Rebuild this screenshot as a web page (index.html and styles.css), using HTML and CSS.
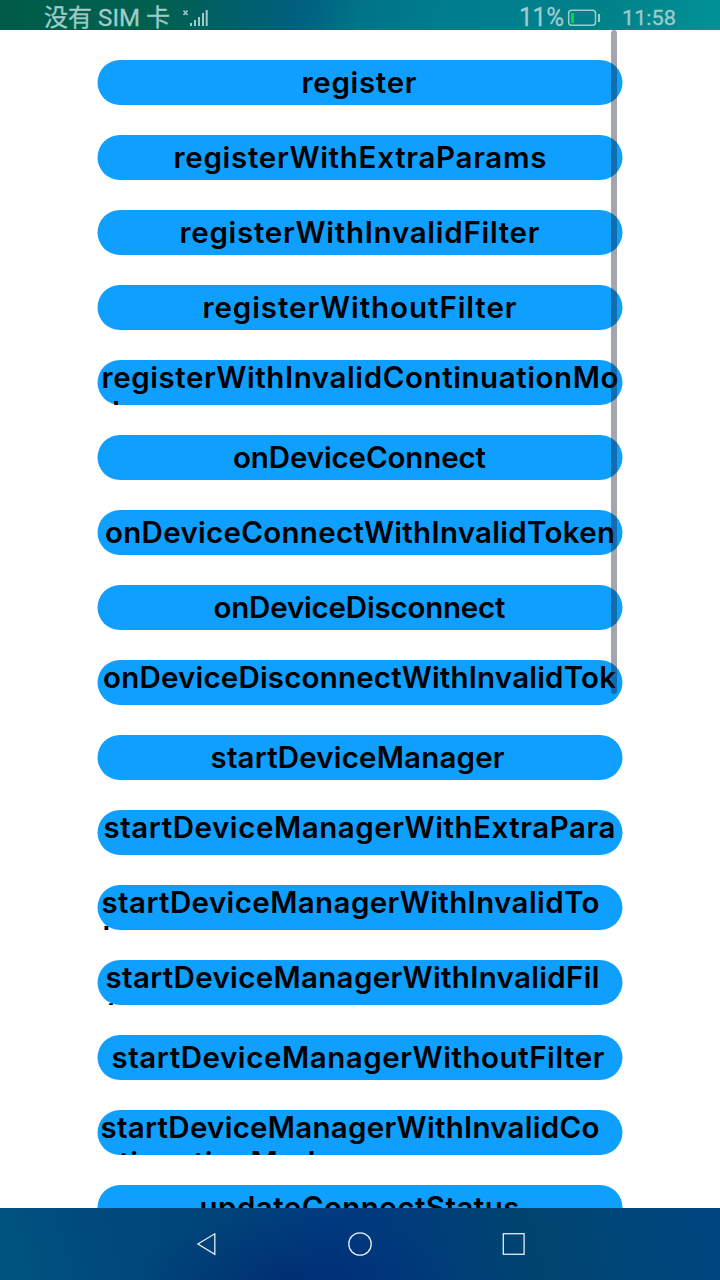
FILE: index.html
```html
<!DOCTYPE html>
<html lang="zh-CN">
<head>
<meta charset="utf-8">
<title>Continuation</title>
<link rel="stylesheet" href="styles.css">
</head>
<body>
<header class="status">
  <svg class="status-art" width="720" height="30" viewBox="0 0 720 30">
    <g class="status-text">
      <text x="44" y="25.500" font-size="24" textLength="126" lengthAdjust="spacingAndGlyphs">没有 SIM 卡</text>
      <text x="519" y="26" font-size="25" textLength="45" lengthAdjust="spacingAndGlyphs">11%</text>
      <text x="622" y="25" font-size="21" textLength="54" lengthAdjust="spacingAndGlyphs">11:58</text>
    </g>
    <path class="thin" d="M183.500 10.500l4 4.500M187.500 10.500l-4 4.500"/>
    <path class="bars" d="M191 23v3M195 20v6M199 17v9M203 13v13M206.700 10v16"/>
    <rect class="thin" x="568.700" y="10.200" width="26.800" height="15" rx="3"/>
    <path class="bars" d="M599 14v8"/>
    <rect x="571" y="13" width="3" height="10" fill="#00d83c"/>
  </svg>
</header>
<main class="list">
  <svg class="pill"><rect class="shape"/><text x="204" y="33" textLength="115">register</text></svg>
  <svg class="pill"><rect class="shape"/><text x="76" y="33" textLength="373">registerWithExtraParams</text></svg>
  <svg class="pill"><rect class="shape"/><text x="82" y="33" textLength="360">registerWithInvalidFilter</text></svg>
  <svg class="pill"><rect class="shape"/><text x="105" y="33" textLength="314">registerWithoutFilter</text></svg>
  <svg class="pill"><rect class="shape"/><text x="4" y="28" textLength="517">registerWithInvalidContinuationMo</text><text x="4" y="63">de</text></svg>
  <svg class="pill"><rect class="shape"/><text x="135.500" y="33" textLength="253">onDeviceConnect</text></svg>
  <svg class="pill"><rect class="shape"/><text x="7.500" y="33" textLength="510">onDeviceConnectWithInvalidToken</text></svg>
  <svg class="pill"><rect class="shape"/><text x="116" y="33" textLength="292">onDeviceDisconnect</text></svg>
  <svg class="pill"><rect class="shape"/><text x="5.500" y="28" textLength="513">onDeviceDisconnectWithInvalidTok</text></svg>
  <svg class="pill"><rect class="shape"/><text x="113" y="33" textLength="294">startDeviceManager</text></svg>
  <svg class="pill"><rect class="shape"/><text x="6" y="28" textLength="512">startDeviceManagerWithExtraPara</text></svg>
  <svg class="pill"><rect class="shape"/><text x="4" y="28" textLength="498">startDeviceManagerWithInvalidTo</text><text x="5" y="63">ken</text></svg>
  <svg class="pill"><rect class="shape"/><text x="8" y="28" textLength="494">startDeviceManagerWithInvalidFil</text><text x="9" y="63">ter</text></svg>
  <svg class="pill"><rect class="shape"/><text x="14" y="33" textLength="493">startDeviceManagerWithoutFilter</text></svg>
  <svg class="pill"><rect class="shape"/><text x="3" y="28" textLength="499">startDeviceManagerWithInvalidCo</text><text x="3" y="63" textLength="233">ntinuationMode</text></svg>
  <svg class="pill"><rect class="shape"/><text x="102" y="33" textLength="320">updateConnectStatus</text></svg>
  <div class="scrollbar"></div>
</main>
<nav class="nav">
  <svg width="720" height="72" viewBox="0 0 720 72">
    <path d="M214.800 25.800v20.600L197.900 36z"/>
    <circle cx="360" cy="36" r="11.200"/>
    <rect x="503.300" y="25.700" width="20.800" height="20.600"/>
  </svg>
</nav>
</body>
</html>
```
FILE: styles.css
```css
body {
  margin: 0;
  width: 720px;
  height: 1280px;
  display: flex;
  flex-direction: column;
  overflow: hidden;
  background: #fff;
  font-family: Inter, "Noto Sans CJK SC", sans-serif;
}
.status {
  flex: 0 0 30px;
  background: linear-gradient(100deg, #005c49 0%, #00604f 22%, #005f68 32%, #006080 42%, #007488 50%, #007d8e 62%, #007f8f 70%, #008087 82%, #009297 100%);
}
.status-art { display: block; }
.status-text {
  fill: #a1cbcb;
  stroke: #a1cbcb;
  stroke-width: 0.3;
  font-family: Roboto, "Noto Sans CJK SC", sans-serif;
}
.thin, .bars {
  fill: none;
  stroke: #a1cbcb;
  stroke-width: 1.5;
}
.bars { stroke-width: 2; }
.list {
  position: relative;
  flex: 0 0 1178px;
  box-sizing: border-box;
  padding-top: 30px;
  display: flex;
  flex-direction: column;
  align-items: center;
  gap: 30px;
  overflow: hidden;
}
.pill {
  flex: 0 0 45px;
  display: block;
  width: 526px;
  height: 45px;
  overflow: hidden;
  font-size: 29.5px;
  font-weight: 600;
  fill: #000;
}
.pill text { transform: translateX(0.5px); }
.shape {
  x: 0.5px;
  width: 525px;
  height: 45px;
  rx: 22.5px;
  fill: #0f9fff;
}
.scrollbar {
  position: absolute;
  top: 0;
  left: 610.5px;
  width: 6px;
  height: 664px;
  border-radius: 3px;
  background: rgba(24, 36, 49, 0.4);
}
.nav {
  flex: 0 0 72px;
  background:
    radial-gradient(ellipse 160px 70px at 290px 76px, rgba(0, 40, 112, 0.7), transparent),
    linear-gradient(75deg, #005580 0%, #004a7d 14%, #004478 32%, #003a80 46%, #003b7c 56%, #00456f 74%, #00467a 88%, #00457f 100%);
}
.nav svg {
  display: block;
  fill: none;
  stroke: #e4edf5;
  stroke-width: 1.3;
}
```
